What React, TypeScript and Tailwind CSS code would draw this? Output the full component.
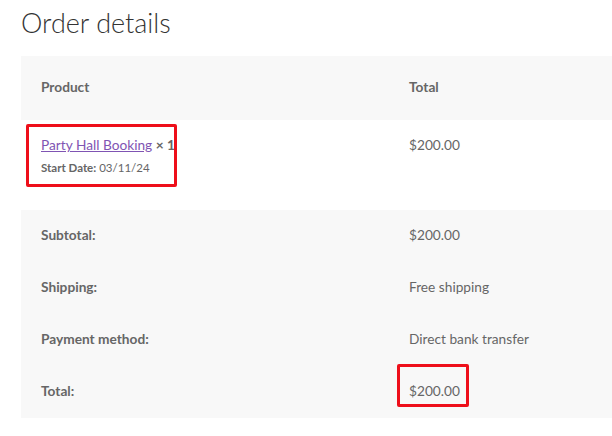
import React from "react";

const font = { fontFamily: "Lato, 'Open Sans', sans-serif" };

function Row({ label, value, boxed }: { label: string; value: string; boxed?: boolean }) {
  return (
    <div className="grid grid-cols-[368px_1fr] h-[52px] items-center">
      <div className="pl-5 font-bold text-[13.7px] text-[#666666] -mt-[1px]">{label}</div>
      <div className="pl-5 text-[13.7px] text-[#666666] relative -mt-[1px]">
        {value}
        {boxed && (
          <div className="absolute left-[8px] top-[-17px] w-[72px] h-[43px] border-[3px] border-[#ee0f1a] rounded-[2px]" />
        )}
      </div>
    </div>
  );
}

export default function App() {
  return (
    <div className="w-[612px] h-[436px] overflow-hidden bg-white" style={font}>
      <div className="pl-[21px]">
        <h2 className="text-[27px] font-light text-[#333333] leading-none pt-[9px] h-[56px]">Order details</h2>
        <div className="w-[640px]">
          <div className="grid grid-cols-[368px_1fr] h-[64px] items-center bg-[#f8f8f8]">
            <div className="pl-5 font-bold text-[13.7px] text-[#666666] -mt-[2px]">Product</div>
            <div className="pl-5 font-bold text-[13.7px] text-[#666666] -mt-[2px]">Total</div>
          </div>
          <div className="grid grid-cols-[368px_1fr] h-[90px] bg-white">
            <div className="pl-5 pt-[15px] relative">
              <div className="text-[13.7px] text-[#666666]">
                <a className="underline text-[#7f54b3]">Party Hall Booking</a>{" "}
                <strong className="font-bold">×&nbsp;1</strong>
              </div>
              <div className="text-[11.5px] text-[#666666] mt-[3px]">
                <span className="font-bold">Start Date:</span> 03/11/24
              </div>
              <div className="absolute left-[5px] top-[4px] w-[151px] h-[63px] border-[3px] border-[#ee0f1a] rounded-[2px]" />
            </div>
            <div className="pl-5 pt-[15px] text-[13.7px] text-[#666666]">$200.00</div>
          </div>
          <div className="bg-[#f8f8f8]">
            <Row label="Subtotal:" value="$200.00" />
            <Row label="Shipping:" value="Free shipping" />
            <Row label="Payment method:" value="Direct bank transfer" />
            <Row label="Total:" value="$200.00" boxed />
          </div>
        </div>
      </div>
    </div>
  );
}
